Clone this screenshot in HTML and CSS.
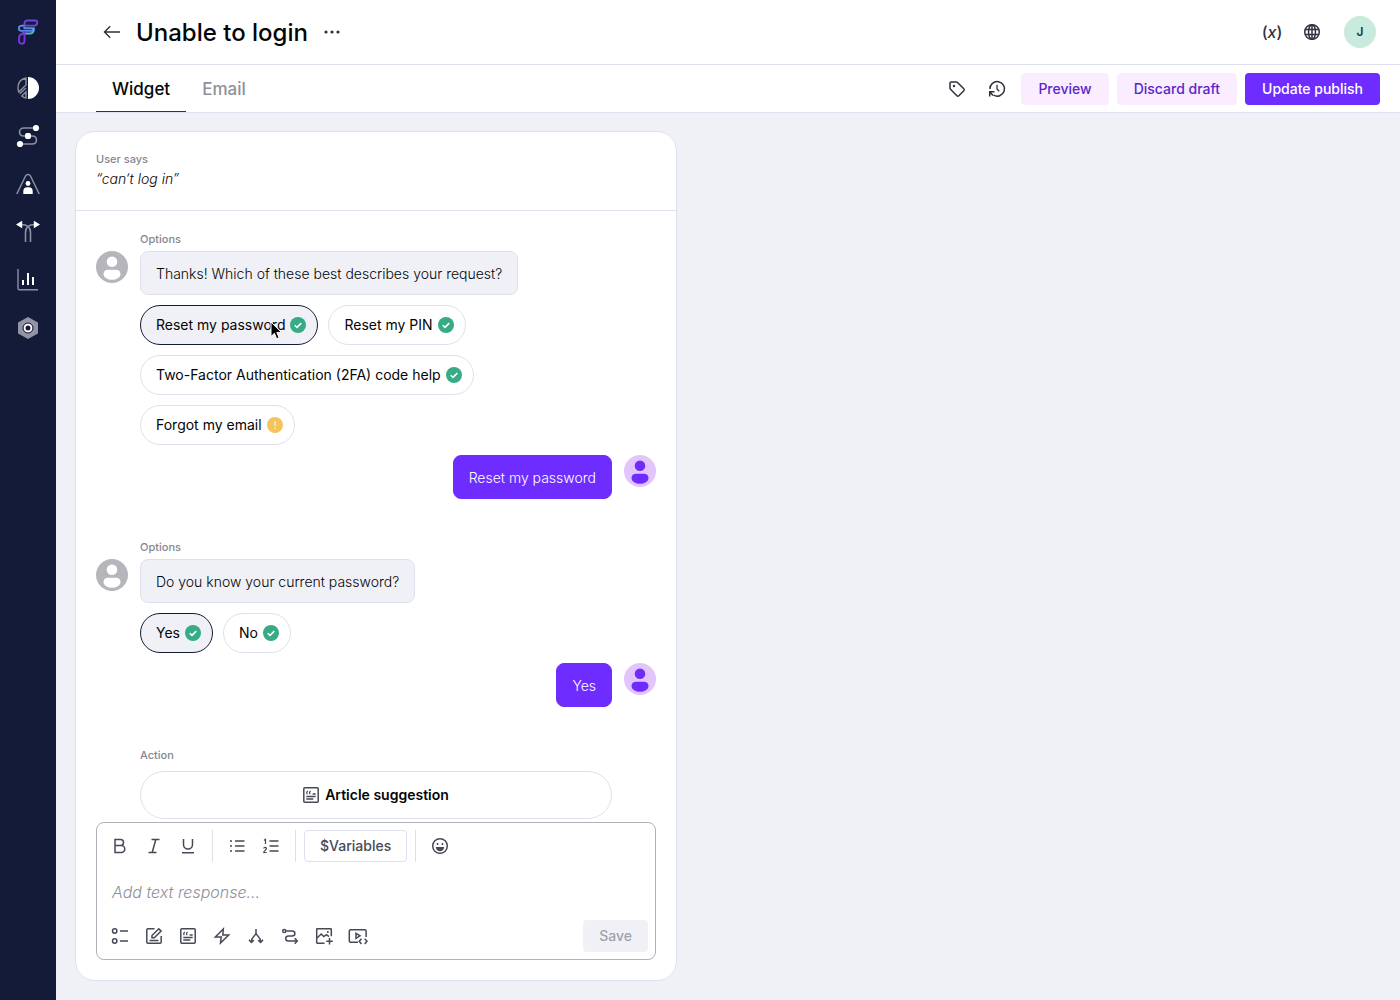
FILE: index.html
```html
<!DOCTYPE html>
<html lang="en">
<head>
<meta charset="utf-8">
<meta name="viewport" content="width=device-width, initial-scale=1">
<title>Unable to login</title>
<link rel="stylesheet" href="styles.css">
</head>
<body>
<svg class="sprite" aria-hidden="true">
  <symbol id="check" viewBox="0 0 16 16"><circle cx="8" cy="8" r="8" fill="#36ab86"/><path d="M4.700 8.200 7 10.400l4.300-4.300" fill="none" stroke="#fff" stroke-width="1.500"/></symbol>
  <symbol id="warn" viewBox="0 0 16 16"><circle cx="8" cy="8" r="8" fill="#f5c35c"/><path d="M8 4.200v4.600M8 10.400v1.400" stroke="#fff" stroke-width="1.200"/></symbol>
  <symbol id="person" viewBox="0 0 32 32"><circle class="face" cx="16" cy="16" r="16"/><circle class="body" cx="16" cy="10.800" r="5.300"/><path class="body" d="M7.500 23c0-2.800 2-4.300 4.400-4.300h8.200c2.400 0 4.400 1.500 4.400 4.300 0 3.600-4.500 5.800-8.500 5.800S7.500 26.600 7.500 23z"/></symbol>
  <symbol id="article" viewBox="0 0 16 16"><rect x=".8" y=".8" width="14.400" height="14.400" rx="1"/><path d="M3.300 9.500h9.400M3.300 12h7M9.600 7h3.100"/><path d="M3.800 7V5.700c0-.8.400-1.300 1.100-1.500M3.500 6.600h1M6.600 7V5.700c0-.8.400-1.300 1.100-1.500M6.300 6.600h1" stroke-width="1.200"/></symbol>
</svg>
<div class="app">
  <nav class="sidebar" aria-label="Main">
    <a class="brand" href="#" aria-label="Home"><svg width="24" height="28" viewBox="0 0 24 28" fill="none" stroke-width="1.900"><path d="M8.500 10.500V5.500c0-1.600 1-3 2.700-3h7.900c1.300 0 2.100.9 2.100 2.100 0 1.700-1 3-2.700 3H6.500" stroke="#6946df"/><path d="M8.500 7.600H6.200c-1.900 0-3.400 1-3.400 2.700 0 1.600 1.200 2.600 2.700 2.600h9.600c1.500 0 2.600-.9 2.600-2.700H7.500" stroke="#5b8ade"/><path d="M17.700 10.200c.4 3.300-1 5.300-3.200 5.300H6" stroke="#52b4dc"/><path d="M8.500 12.900v9.500c0 1.800-1 3.300-2.700 3.300-1.600 0-2.800-1.200-2.800-2.900v-2.500c0-2.500 1.300-4.600 5.500-4.800" stroke="#7734e0"/></svg></a>
    <a href="#" aria-label="Overview"><svg width="24" height="24" viewBox="0 0 24 24"><path d="M12 1a11 11 0 0 1 0 22z" fill="#fff"/><path d="M10 2C5 3 2 7 2 12c0 1.700.300 3 .8 4L10 9zM3.800 17.800 10 12M5.800 20l4.200-4v6c-1.600-.3-2.900-.9-4.200-2z" fill="none" stroke="#8d90a1" stroke-width="1.400"/></svg></a>
    <a href="#" aria-label="Workflows"><svg width="24" height="24" viewBox="0 0 24 24"><path d="M20 4H8c-3 0-4.500 2-4.500 4s1.500 4 4.500 4h8c3 0 4.500 2 4.500 4s-1.500 4-4.500 4H4" fill="none" stroke="#8d90a1" stroke-width="1.600"/><circle cx="20" cy="4" r="3.100" fill="#fff"/><circle cx="4" cy="20" r="3.100" fill="#fff"/><rect x="9" y="9" width="6" height="6" rx="2" fill="#fff"/></svg></a>
    <a href="#" aria-label="Audiences"><svg width="24" height="24" viewBox="0 0 24 24"><path d="M.8 22 9.500 4c1-2 4-2 5 0l8.700 18" fill="none" stroke="#8d90a1" stroke-width="1.500"/><circle cx="12" cy="11.500" r="2.400" fill="#fff"/><path d="M7.300 22v-2.700a4 4 0 0 1 4-4h1.400a4 4 0 0 1 4 4V22z" fill="#fff"/></svg></a>
    <a href="#" aria-label="Routing"><svg width="24" height="24" viewBox="0 0 24 24"><path d="M5 4.500c4 0 9.500 1.500 9.500 8V22M19 4.500c-4 0-9.500 1.500-9.500 8V22" fill="none" stroke="#8d90a1" stroke-width="1.600"/><path d="M0 4.500 6.200.7v7.600zM24 4.500 17.800.7v7.600z" fill="#fff"/></svg></a>
    <a href="#" aria-label="Reports"><svg width="24" height="24" viewBox="0 0 24 24"><path d="M2 1v19.500c0 .8.400 1.200 1.200 1.200H22" fill="none" stroke="#8d90a1" stroke-width="1.400"/><path d="M7 12v5M12 5v12M17 9v8" stroke="#fff" stroke-width="2"/></svg></a>
    <a href="#" aria-label="Settings"><svg width="24" height="24" viewBox="0 0 24 24"><path d="m12 1 10 5.500v11L12 23 2 17.500v-11z" fill="#9294a5"/><circle cx="12" cy="12" r="3.500" fill="#141b38" stroke="#fff" stroke-width="2"/><circle cx="12" cy="12" r="5" fill="none" stroke="#141b38"/></svg></a>
  </nav>
  <div class="workspace">
    <header class="topbar">
      <a class="icon" href="#" aria-label="Back"><svg width="18" height="18" viewBox="0 0 18 18"><path d="M17 9H1.500M7.200 3.300 1.500 9l5.700 5.700" stroke-width="1.400"/></svg></a>
      <h1>Unable to login</h1>
      <button class="icon" aria-label="More"><svg width="18" height="18" viewBox="0 0 18 18"><g fill="#2f313c" stroke="none"><circle cx="3" cy="9" r="1.600"/><circle cx="9" cy="9" r="1.600"/><circle cx="15" cy="9" r="1.600"/></g></svg></button>
      <div class="account">
        <button class="icon var" aria-label="Variables">(<i>x</i>)</button>
        <button class="icon" aria-label="Language"><svg width="18" height="18" viewBox="0 0 18 18"><circle cx="9" cy="9" r="7.300"/><ellipse cx="9" cy="9" rx="3.500" ry="7.300"/><path d="M2 6.500h14M2 11.500h14M9 1.600v14.800"/></svg></button>
        <button class="initial" aria-label="Account">J</button>
      </div>
    </header>
    <div class="tabbar">
      <nav class="tabs" aria-label="Channel"><a class="tab current" href="#">Widget</a><a class="tab" href="#">Email</a></nav>
      <div class="actions">
        <button class="icon" aria-label="Tags"><svg width="18" height="18" viewBox="0 0 18 18"><path d="M2 3.300C2 2.500 2.500 2 3.300 2h5c.5 0 .8.100 1.200.5l6.300 6.300c.6.600.6 1.300 0 1.900l-5 5c-.6.600-1.300.6-1.900 0L2.500 9.300C2.100 8.900 2 8.600 2 8.100z" stroke-width="1.500"/><circle cx="6" cy="6" r="1.200" fill="#2f313c" stroke="none"/></svg></button>
        <button class="icon" aria-label="History"><svg width="18" height="18" viewBox="0 0 18 18"><path d="M1.900 9A7.300 7.300 0 1 1 5.600 15.200M1.700 16.600v-4.800h4.800M2 12l3 3.500" stroke-width="1.500"/><path d="M9 4.800V9l2.200 2.200" stroke-width="1.300"/></svg></button>
        <button class="btn soft">Preview</button>
        <button class="btn soft">Discard draft</button>
        <button class="btn solid">Update publish</button>
      </div>
    </div>
    <main class="canvas">
      <section class="card">
        <div class="query"><span class="label">User says</span><q>can‘t log in</q></div>
        <div class="chat">
          <article class="step">
            <span class="label">Options</span>
            <svg class="avatar bot"><use href="#person"/></svg>
            <div class="content">
              <p class="bubble">Thanks! Which of these best describes your request?</p>
              <div class="pills">
                <button class="pill picked">Reset my password<svg><use href="#check"/></svg>
                  <svg class="cursor" viewBox="0 0 16 20"><path d="M2 1v14.500l3.400-3.200 2.300 5.400 2.400-1-2.300-5.300h4.700z" fill="#000" stroke="#fff" stroke-width="1"/></svg></button>
                <button class="pill">Reset my PIN<svg><use href="#check"/></svg></button>
                <button class="pill">Two-Factor Authentication (2FA) code help<svg><use href="#check"/></svg></button>
                <button class="pill">Forgot my email<svg><use href="#warn"/></svg></button>
              </div>
            </div>
          </article>
          <div class="reply"><p class="bubble">Reset my password</p><svg class="avatar"><use href="#person"/></svg></div>
          <article class="step">
            <span class="label">Options</span>
            <svg class="avatar bot"><use href="#person"/></svg>
            <div class="content">
              <p class="bubble">Do you know your current password?</p>
              <div class="pills">
                <button class="pill picked">Yes<svg><use href="#check"/></svg></button>
                <button class="pill">No<svg><use href="#check"/></svg></button>
              </div>
            </div>
          </article>
          <div class="reply"><p class="bubble">Yes</p><svg class="avatar"><use href="#person"/></svg></div>
          <article class="step">
            <span class="label">Action</span>
            <div class="content"><button class="suggest"><svg class="line"><use href="#article"/></svg>Article suggestion</button></div>
          </article>
        </div>
        <form class="composer">
          <div class="tools">
            <div class="group">
              <button type="button" aria-label="Bold"><svg class="line" viewBox="0 0 16 16"><path d="M3 1.500h5.500a3 3 0 0 1 0 6H3zM3 7.500h6.300a3.400 3.400 0 0 1 0 7H3z"/></svg></button>
              <button type="button" aria-label="Italic"><svg class="line" viewBox="0 0 16 16"><path d="M5.500 1.500h8M2.500 14.500h8M9.800 1.500 6.200 14.500"/></svg></button>
              <button type="button" aria-label="Underline"><svg class="line" viewBox="0 0 16 16"><path d="M3.500 1v5.500a4.500 4.500 0 0 0 9 0V1M2 14.700h12"/></svg></button>
            </div>
            <span class="rule"></span>
            <div class="group">
              <button type="button" aria-label="Bulleted list"><svg class="line" viewBox="0 0 16 16"><path d="M1 3h2M1 8h2M1 13h2M6 3h9.500M6 8h9.500M6 13h9.500"/></svg></button>
              <button type="button" aria-label="Numbered list"><svg class="line" viewBox="0 0 16 16"><path d="M6.500 3h9M6.500 8h9M6.500 13h9"/><path d="M1 2.300 2.500 1.300v4.700M.7 10.500c.2-1.700 3-1.500 2.700.2-.2 1.300-2.500 2.200-2.700 3.800h3" stroke-width="1.200"/></svg></button>
            </div>
            <span class="rule"></span>
            <button type="button" class="variables">$Variables</button>
            <span class="rule"></span>
            <button type="button" aria-label="Emoji"><svg class="line" viewBox="0 0 16 16"><circle cx="8" cy="8" r="7.300"/><path d="M5.500 5v2M10.500 5v2"/><path d="M3.800 9h8.400a4.200 4.200 0 0 1-8.400 0z" fill="#474a56" stroke="none"/></svg></button>
          </div>
          <textarea aria-label="Text response" placeholder="Add text response..."></textarea>
          <div class="foot">
            <div class="group">
              <button type="button" aria-label="Options"><svg class="line" viewBox="0 0 16 16"><circle cx="2.700" cy="3" r="2.200"/><circle cx="2.700" cy="13" r="2.200"/><path d="M8 3h8M8 13h8"/></svg></button>
              <button type="button" aria-label="Form"><svg class="line" viewBox="0 0 16 16"><path d="M8.500.8H2C1.200.8.800 1.200.8 2v12c0 .8.400 1.200 1.200 1.200h12c.8 0 1.200-.4 1.200-1.200V8M3.500 12.500h9"/><path d="M6 9.800V7.500L12.800.8l2.300 2.300-6.800 6.700z"/></svg></button>
              <button type="button" aria-label="Article"><svg class="line"><use href="#article"/></svg></button>
              <button type="button" aria-label="Trigger"><svg class="line" viewBox="0 0 16 16"><path d="M9.300 1 1.300 9h5.900l-.7 6 8.200-8H8.800z"/></svg></button>
              <button type="button" aria-label="Branch"><svg class="line" viewBox="0 0 16 16"><path d="M8 1v4c0 2.500-4.700 3.500-4.700 9M8 5c0 2.500 4.700 3.500 4.700 9M1 11.800l2.300 2.700 2.600-2.300M15 11.800l-2.300 2.700-2.600-2.300"/></svg></button>
              <button type="button" aria-label="Flow"><svg class="line" viewBox="0 0 16 16"><circle cx="2.300" cy="3" r="1.600"/><path d="M4.300 3h5.900c3.600 0 3.600 5 0 5H6.500c-3.700 0-3.700 5 0 5h8.500M12.700 10.300l2.600 2.700-2.600 2.700"/></svg></button>
              <button type="button" aria-label="Image"><svg class="line" viewBox="0 0 16 16"><path d="M8.500 15.200H1.300c-.4 0-.6-.2-.6-.6V1.300c0-.4.200-.6.600-.6h13.400c.4 0 .6.200.6.600v7M1 10l4.200-4 3 3M8 8.300l2.500-1.700 2.500 2M13.500 10v6.500M10.300 13.300h6.500"/><circle cx="11.800" cy="4" r="1" fill="#474a56" stroke="none"/></svg></button>
              <button type="button" aria-label="Video embed"><svg class="line wide" viewBox="0 0 20 16"><path d="M10 14.300H2.600c-.8 0-1.300-.5-1.300-1.300V3c0-.8.500-1.300 1.300-1.300h14.200c.8 0 1.300.5 1.300 1.300v6M8 5.300v5l4-2.500zM13.500 10.700 11.200 13.300l2.300 2.600M16.700 10.700l2.300 2.600-2.300 2.600"/></svg></button>
            </div>
            <button class="save" disabled>Save</button>
          </div>
        </form>
      </section>
    </main>
  </div>
</div>
</body>
</html>
```
FILE: styles.css
```css
* { box-sizing: border-box; }
body { margin: 0; font: 14px/20px Inter, "Liberation Sans", sans-serif; color: #050507; }
button { font: inherit; color: inherit; background: none; border: 0; padding: 0; }
a { color: inherit; text-decoration: none; }
svg { display: block; overflow: visible; flex: none; }
p, h1 { margin: 0; }
.sprite { position: absolute; width: 0; height: 0; }

.app { display: flex; height: 100vh; }
.sidebar { width: 56px; flex: none; background: #141b38; display: flex; flex-direction: column; align-items: center; gap: 16px; padding-top: 16px; }
.sidebar a { height: 32px; width: 32px; display: grid; place-items: center; }
.sidebar .brand { margin-bottom: 8px; }
.workspace { flex: 1; min-width: 0; display: flex; flex-direction: column; background: #fff; }

.topbar { height: 65px; border-bottom: 1px solid #dfe0ee; display: flex; align-items: center; padding: 0 24px 0 40px; }
.icon { width: 32px; height: 32px; display: grid; place-items: center; fill: none; stroke: #2f313c; stroke-width: 1.5; }
h1 { font-size: 24px; line-height: 32px; font-weight: 500; padding-top: 2px; margin: 0 8px; }
.account { display: flex; gap: 8px; margin-left: auto; }
.icon.var { display: block; font-size: 16px; font-weight: 500; color: #2f313c; }
.initial { width: 32px; height: 32px; margin-left: 8px; border-radius: 50%; background: #c9ebdd; color: #0c4350; font-size: 12px; font-weight: 600; }

.tabbar { height: 48px; border-bottom: 1px solid #dfe0ee; display: flex; justify-content: space-between; padding: 0 20px 0 40px; }
.tabs { display: flex; }
.tab { padding: 0 16px; font-size: 17px; line-height: 48px; font-weight: 500; color: #8e8f99; }
.tab.current { color: #050507; border-bottom: 1px solid #30323c; }
.actions { display: flex; align-items: center; gap: 8px; }
.btn { height: 32px; padding: 0 17px; border-radius: 4px; font-weight: 500; }
.soft { background: #faedff; color: #5a26c9; }
.solid { background: #6f2cff; color: #fff; }

.canvas { flex: 1; min-height: 0; background: #f0f1f6; padding: 18px 19px 19px; }
.card { height: 100%; max-width: 602px; background: #fff; border: 1px solid #dfe0ee; border-radius: 20px; display: flex; flex-direction: column; padding-bottom: 20px; }
.query { height: 79px; flex: none; padding: 19px 20px; border-bottom: 1px solid #dfe0ee; }
.label { display: block; font-size: 11px; line-height: 16px; font-weight: 500; color: #85868f; }
q { display: block; font-style: italic; font-weight: 300; line-height: 24px; quotes: "“" "”"; }

.chat { flex: 1; min-height: 0; overflow: hidden; padding: 20px 20px 0; }
.step { display: grid; grid-template-columns: 32px 1fr; column-gap: 12px; row-gap: 4px; padding-right: 44px; }
.step .label, .content { grid-column: 2; }
.avatar { width: 32px; height: 32px; --face: #e3c5fd; --body: #6f2cff; }
.avatar.bot { --face: #b6b5bb; --body: #fff; }
.face { fill: var(--face); }
.body { fill: var(--body); }
.bubble { width: fit-content; padding: 12px 15px 10px; border: 1px solid #dfe0ee; border-radius: 8px; background: #f0f1f6; font-weight: 300; }
.pills { display: flex; flex-wrap: wrap; gap: 10px; margin-top: 10px; }
.pill { position: relative; height: 40px; display: flex; align-items: center; gap: 5px; padding: 0 11px 0 15px; border: 1px solid #dfe0ee; border-radius: 20px; font-weight: 400; }
.pill svg { width: 16px; height: 16px; }
.picked { background: #f0f1f6; border-color: #141b38; }
.pill .cursor { position: absolute; left: 128px; top: 15px; width: 16px; height: 20px; }
.reply { display: flex; justify-content: flex-end; gap: 12px; margin: 10px 0 40px; }
.reply .bubble { background: #6f2cff; border-color: #6f2cff; color: #fff; }
.suggest { width: 100%; height: 48px; margin-top: 4px; border: 1px solid #dfe0ee; border-radius: 24px; display: flex; align-items: center; justify-content: center; gap: 6px; font-weight: 600; }
.line { width: 16px; height: 16px; fill: none; stroke: #474a56; stroke-width: 1.5; }
.wide { width: 20px; }

.composer { margin: 0 20px; height: 138px; border: 1px solid #b0b0b8; border-radius: 8px; padding: 7px; }
.tools, .foot { display: flex; gap: 8px; }
.tools button, .foot .group button { height: 32px; min-width: 32px; display: grid; place-items: center; }
.group { display: flex; gap: 2px; }
.rule { width: 1px; background: #dfe0e8; }
.tools .variables { padding: 0 15px; border: 1px solid #dfe0ee; border-radius: 4px; color: #474a56; font-weight: 500; }
textarea { display: block; width: 100%; height: 58px; border: 0; padding: 18px 8px 16px; resize: none; overflow: hidden; font: 300 16px/24px Inter, "Liberation Sans", sans-serif; }
textarea::placeholder { color: #8f8f98; font-style: italic; }
.foot { justify-content: space-between; }
.save { height: 32px; padding: 0 16px; border-radius: 4px; background: #f0f1f6; color: #a0a1aa; font-weight: 500; }
```
